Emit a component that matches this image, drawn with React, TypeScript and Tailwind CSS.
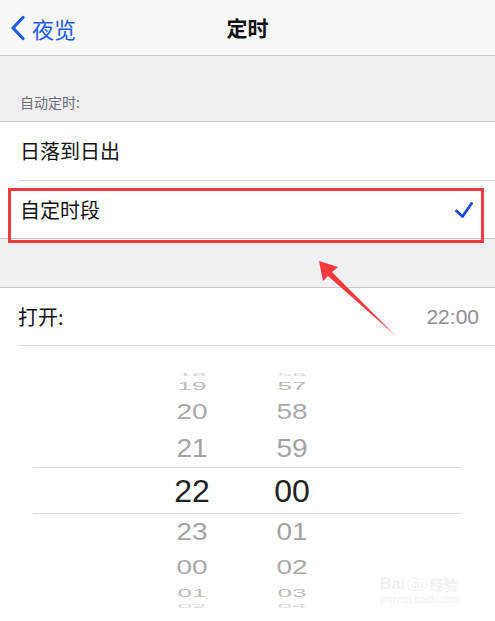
import React from "react";

const cjk = { fontFamily: '"Noto Sans CJK SC", "Noto Sans", sans-serif' };
const num = { fontFamily: '"Liberation Sans", Arial, sans-serif' };

type Row = { h: string; m: string; cls: string; color: string; scale: string; size: string };

const rows: Row[] = [
  { h: "18", m: "56", cls: "h-[8px]", color: "text-[#d4d4d4]", scale: "scale-y-[0.15]", size: "text-[26px]" },
  { h: "19", m: "57", cls: "h-[14px]", color: "text-[#b9b9b9]", scale: "scale-y-[0.42]", size: "text-[26px]" },
  { h: "20", m: "58", cls: "h-[38px]", color: "text-[#a9a9a9]", scale: "scale-y-[0.82]", size: "text-[28px]" },
  { h: "21", m: "59", cls: "h-[36px]", color: "text-[#a3a3a3]", scale: "scale-y-[0.92]", size: "text-[28px]" },
];

const rowsBelow: Row[] = [
  { h: "23", m: "01", cls: "h-[36px]", color: "text-[#a3a3a3]", scale: "scale-y-[0.86]", size: "text-[28px]" },
  { h: "00", m: "02", cls: "h-[36px]", color: "text-[#aaaaaa]", scale: "scale-y-[0.7]", size: "text-[28px]" },
  { h: "01", m: "03", cls: "h-[14px]", color: "text-[#bcbcbc]", scale: "scale-y-[0.45]", size: "text-[26px]" },
  { h: "02", m: "04", cls: "h-[12px]", color: "text-[#d8d8d8]", scale: "scale-y-[0.18]", size: "text-[26px]" },
];

function PickerRow({ r }: { r: Row }) {
  return (
    <div className={`flex items-center ${r.cls} ${r.color} ${r.size} leading-none overflow-visible`} style={num}>
      <div className={`w-[60px] ml-[162px] text-center ${r.scale}`}>{r.h}</div>
      <div className={`w-[60px] ml-[40px] text-center ${r.scale}`}>{r.m}</div>
    </div>
  );
}

export default function App() {
  return (
    <div className="relative w-[495px] h-[621px] overflow-hidden bg-white" style={cjk}>
      {/* nav */}
      <div className="h-[56px] bg-[#f8f8f8] border-b border-[#c8c7cc] flex items-center relative">
        <div className="flex items-center pl-[10px] text-[#1b5ce0]">
          <svg width="16" height="26" viewBox="0 0 16 26" fill="none">
            <path d="M13 2.5 L3 13 L13 23.5" stroke="currentColor" strokeWidth="3.2" strokeLinecap="round" strokeLinejoin="round" />
          </svg>
          <span className="text-[22px] ml-[6px] leading-none">夜览</span>
        </div>
        <div className="absolute left-0 right-0 text-center text-[21px] font-bold text-[#111] pointer-events-none">定时</div>
      </div>

      {/* section header */}
      <div className="h-[66px] bg-[#efeff4] border-b border-[#c8c7cc] flex items-end pl-[20px] pb-[8px]">
        <span className="text-[14px] text-[#6d6d72]">自动定时:</span>
      </div>

      <div className="bg-white">
        <div className="h-[58px] flex items-center pl-[20px] text-[20px] text-[#111]">日落到日出</div>
        <div className="ml-[18px] border-t border-[#d8d8dc]" />
        <div className="h-[58px] flex items-center justify-between pl-[20px] pr-[22px] text-[20px] text-[#111] border-b border-[#c8c7cc]">
          <span>自定时段</span>
          <svg width="18" height="16" viewBox="0 0 18 16" fill="none">
            <path d="M1.5 9 L7.5 14.5 L16.5 1.5" stroke="#1b48d6" strokeWidth="2.8" strokeLinecap="round" strokeLinejoin="round" />
          </svg>
        </div>
      </div>

      <div className="h-[49px] bg-[#efeff4] border-b border-[#c8c7cc]" />

      <div className="h-[57px] flex items-center justify-between pl-[18px] pr-[16px] text-[20px]">
        <span className="text-[#111]">打开:</span>
        <span className="text-[21px] text-[#8e8e93]" style={num}>22:00</span>
      </div>
      <div className="ml-[18px] border-t border-[#d8d8dc]" />

      {/* picker */}
      <div className="pt-[25px]">
        {rows.map((r) => (
          <PickerRow key={r.h} r={r} />
        ))}
        <div className="h-[47px] mx-[33px] border-y border-[#dcdcdc] flex items-center text-[32px] text-[#222] leading-none" style={num}>
          <div className="w-[60px] ml-[129px] text-center">22</div>
          <div className="w-[60px] ml-[40px] text-center">00</div>
        </div>
        {rowsBelow.map((r) => (
          <PickerRow key={r.h} r={r} />
        ))}
      </div>

      {/* highlight box */}
      <div className="absolute left-[8px] top-[188px] w-[476px] h-[55px] border-[3px] border-[#f53a3d]" />

      {/* arrow */}
      <svg className="absolute left-0 top-0" width="495" height="621" viewBox="0 0 495 621">
        <polygon points="319,261 338,267 332,272 396,336 328,276 323,281" fill="#f53a3d" />
      </svg>

      {/* watermark */}
      <div className="absolute left-[380px] top-[576px] flex flex-col items-start leading-none text-[#f1f1f1]">
        <div className="flex items-center gap-[2px]">
          <span className="text-[16px] font-bold" style={num}>Bai</span>
          <span className="text-[11px] border border-[#f1f1f1] rounded-full px-[3px]" style={num}>du</span>
          <span className="text-[14px] font-bold">经验</span>
        </div>
        <span className="text-[10px] mt-[3px]" style={num}>jingyan.baidu.com</span>
      </div>
    </div>
  );
}
